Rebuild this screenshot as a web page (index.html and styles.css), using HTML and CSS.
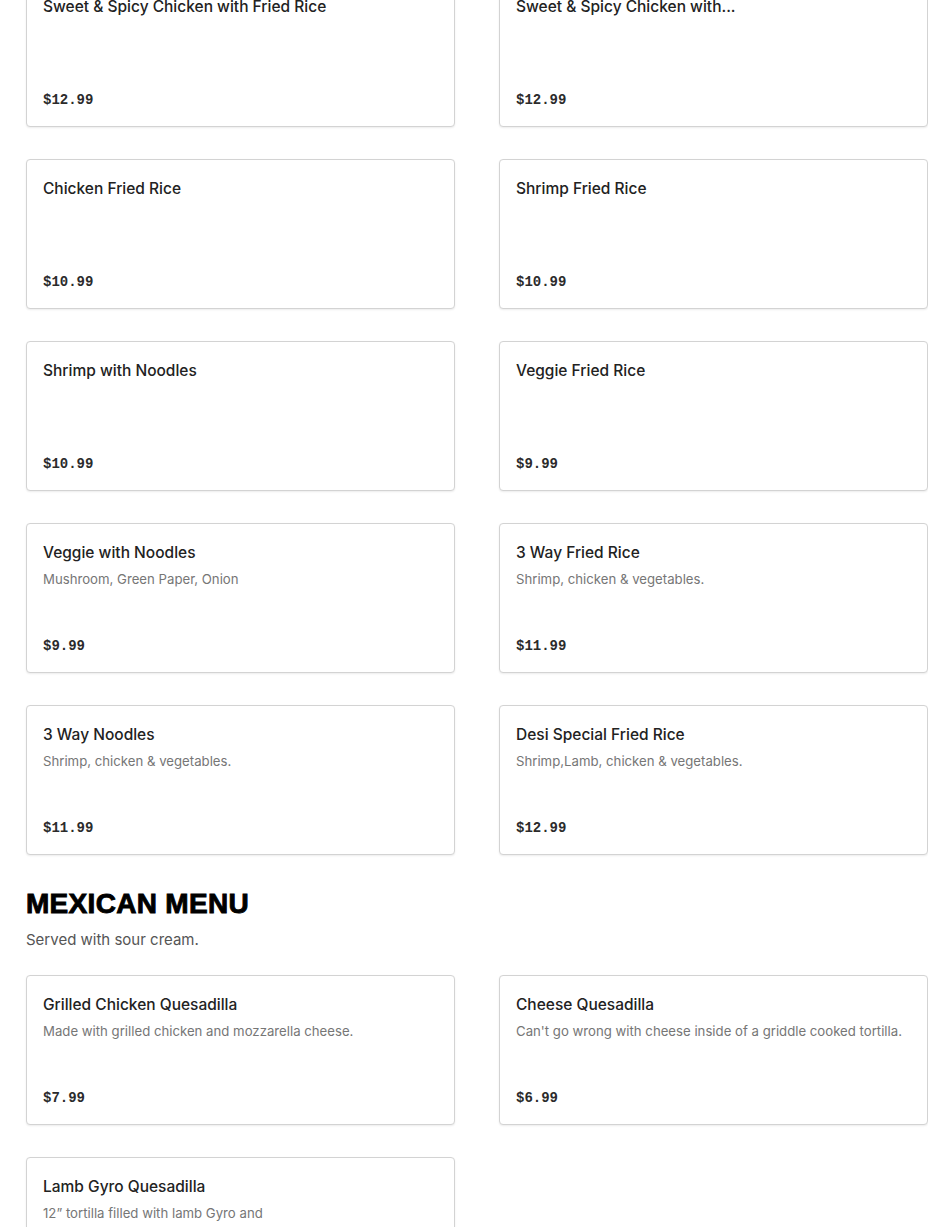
FILE: index.html
```html
<!DOCTYPE html>
<html lang="en">
<head>
<meta charset="utf-8">
<title>Menu</title>
<link rel="stylesheet" href="styles.css">
</head>
<body>
<main class="page">
  <section class="section section-scrolled">
    <div class="grid">
      <div class="card"><div class="title">Sweet &amp; Spicy Chicken with Fried Rice</div><div class="price">$12.99</div></div>
      <div class="card"><div class="title">Sweet &amp; Spicy Chicken with...</div><div class="price">$12.99</div></div>
      <div class="card"><div class="title">Chicken Fried Rice</div><div class="price">$10.99</div></div>
      <div class="card"><div class="title">Shrimp Fried Rice</div><div class="price">$10.99</div></div>
      <div class="card"><div class="title">Shrimp with Noodles</div><div class="price">$10.99</div></div>
      <div class="card"><div class="title">Veggie Fried Rice</div><div class="price">$9.99</div></div>
      <div class="card"><div class="title">Veggie with Noodles</div><div class="desc">Mushroom, Green Paper, Onion</div><div class="price">$9.99</div></div>
      <div class="card"><div class="title">3 Way Fried Rice</div><div class="desc">Shrimp, chicken &amp; vegetables.</div><div class="price">$11.99</div></div>
      <div class="card"><div class="title">3 Way Noodles</div><div class="desc">Shrimp, chicken &amp; vegetables.</div><div class="price">$11.99</div></div>
      <div class="card"><div class="title">Desi Special Fried Rice</div><div class="desc">Shrimp,Lamb, chicken &amp; vegetables.</div><div class="price">$12.99</div></div>
    </div>
  </section>
  <section class="section">
    <h2 class="heading">MEXICAN MENU</h2>
    <p class="subtitle">Served with sour cream.</p>
    <div class="grid">
      <div class="card"><div class="title">Grilled Chicken Quesadilla</div><div class="desc">Made with grilled chicken and mozzarella cheese.</div><div class="price">$7.99</div></div>
      <div class="card"><div class="title">Cheese Quesadilla</div><div class="desc">Can't go wrong with cheese inside of a griddle cooked tortilla.</div><div class="price">$6.99</div></div>
      <div class="card"><div class="title">Lamb Gyro Quesadilla</div><div class="desc">12” tortilla filled with lamb Gyro and<br>mozzarella cheese.</div><div class="price">$9.99</div></div>
    </div>
  </section>
</main>
</body>
</html>
```
FILE: styles.css
```css
html, body {
  margin: 0;
  padding: 0;
  background: #ffffff;
}
body {
  font-family: Inter, "Liberation Sans", Arial, sans-serif;
  color: #2b2b2b;
}
.page {
  width: 902px;
  padding-left: 26px;
  overflow: hidden;
}
.section-scrolled {
  margin-top: -23px;
}
.section + .section {
  margin-top: 32px;
}
.grid {
  display: grid;
  grid-template-columns: 429px 429px;
  column-gap: 44px;
  row-gap: 32px;
}
.card {
  box-sizing: border-box;
  height: 150px;
  border: 1px solid #d3d3d3;
  border-radius: 4px;
  box-shadow: 0 1px 2px rgba(0, 0, 0, 0.08);
  padding: 17px 16px 16px;
  display: flex;
  flex-direction: column;
  background: #fff;
}
.title {
  font-size: 15.5px;
  line-height: 24px;
  font-weight: 500;
  color: #222222;
  white-space: nowrap;
}
.desc {
  margin-top: 3px;
  font-size: 13.2px;
  line-height: 22px;
  color: #767676;
}
.price {
  margin-top: auto;
  font-family: "Liberation Mono", "DejaVu Sans Mono", monospace;
  font-weight: 700;
  font-size: 14px;
  line-height: 20px;
  color: #2b2b2b;
}
.heading {
  margin: 0;
  font-family: "Liberation Sans", Arial, sans-serif;
  font-weight: 700;
  font-size: 28px;
  line-height: 34px;
  color: #000;
  -webkit-text-stroke: 0.9px #000;
  letter-spacing: 0.3px;
}
.subtitle {
  margin: 7px 0 23px;
  font-size: 15px;
  line-height: 24px;
  color: #555555;
}
```
